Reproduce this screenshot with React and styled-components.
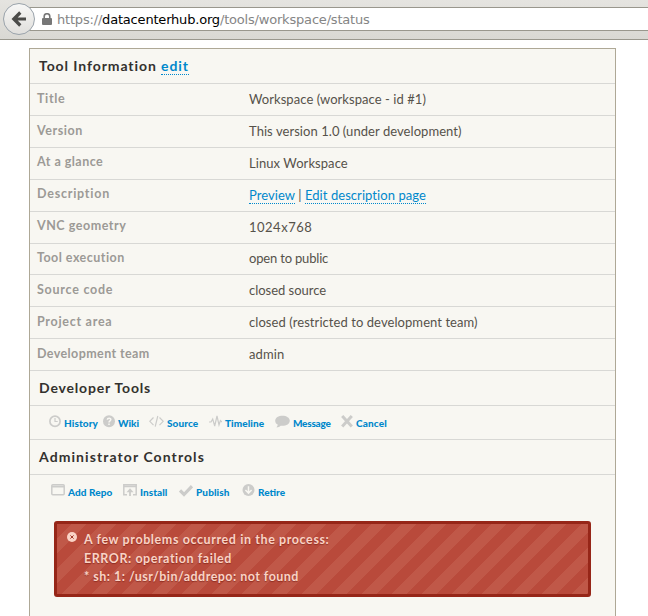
import React from "react";
import styled, { createGlobalStyle } from "styled-components";

const GlobalStyle = createGlobalStyle`
  * { box-sizing: border-box; }
  html { overflow: hidden; }
  body { margin: 0; background: #fff; font-family: Lato, sans-serif; color: #56524a; }
`;

const Page = styled.div`
  width: 648px;
  height: 616px;
  overflow: hidden;
`;

const Toolbar = styled.header`
  display: flex;
  align-items: flex-start;
  height: 40px;
  padding: 3px 0 0 3px;
  background: linear-gradient(#e5e4e0, #d9d8d3);
  border-bottom: 1px solid #99978d;
`;

const BackButton = styled.button`
  position: relative;
  flex: none;
  display: grid;
  place-items: center;
  width: 32px;
  height: 32px;
  padding: 0;
  border: 1px solid #9aa3ab;
  border-radius: 50%;
  background: linear-gradient(#f7f7f6, #e0dfdc);
`;

const AddressBar = styled.div`
  display: flex;
  align-items: center;
  flex: 1;
  height: 24px;
  margin: 4px 0 0 -6px;
  padding-left: 13px;
  background: #fff;
  border: solid #99978d;
  border-width: 1px 0;
`;

const Url = styled.span`
  margin-left: 5px;
  padding-top: 1px;
  font: 13px/22px "DejaVu Sans", sans-serif;
  color: #858585;
  letter-spacing: -0.19px;
  white-space: pre;

  b { font-weight: 400; color: #000; }
`;

const Panel = styled.main`
  width: 587px;
  height: 600px;
  margin: 8px 0 0 29px;
  background: #f8f7f2;
  border: 1px solid #aea896;
`;

const Heading = styled.h2`
  height: 35px;
  margin: 0;
  padding-left: 9px;
  border-bottom: 1px solid #d8d8d5;
  font-size: 14px;
  font-weight: 700;
  line-height: 34px;
  letter-spacing: ${(p) => p.$spacing}px;
  color: #33312e;
  white-space: pre;
`;

const Link = styled.a`
  color: #0088cc;
  border-bottom: 1px dotted #0088cc;
`;

const Row = styled.div`
  display: grid;
  grid-template-columns: 212px 1fr;
  height: ${(p) => p.$height || 32}px;
  padding-left: 7px;
  border-bottom: 1px solid #d8d8d5;
  white-space: pre;
`;

const Label = styled.span`
  font-size: 12.5px;
  font-weight: 700;
  line-height: ${(p) => p.$line || 30}px;
  letter-spacing: ${(p) => p.$spacing}px;
  color: #9c9a96;
`;

const Value = styled.span`
  font-size: 13px;
  line-height: ${(p) => p.$line || 30}px;
  letter-spacing: ${(p) => p.$spacing}px;
`;

const Actions = styled.nav`
  display: flex;
  height: 34px;
  padding-left: ${(p) => p.$inset}px;
  border-bottom: ${(p) => (p.$ruled ? "1px solid #d8d8d5" : "0")};
`;

const Action = styled.a`
  display: flex;
  width: ${(p) => p.$width}px;
  color: #0088cc;
  font-size: 10px;
  font-weight: 900;
  line-height: 35px;
  letter-spacing: ${(p) => p.$spacing || 0}px;
  white-space: nowrap;

  svg {
    flex: none;
    margin: 9px 3px 0 0;
    color: #ccccca;
  }
`;

const Alert = styled.section`
  display: flex;
  width: 537px;
  height: 76px;
  margin: 12px 0 0 24px;
  padding: 7px 10px;
  border: 3px solid #962618;
  border-radius: 3px;
  background: #b94a3b
    linear-gradient(135deg, transparent 25%, #c05848 25%, #c05848 50%, transparent 50%, transparent 75%, #c05848 75%)
    0 0 / 30px 30px;
`;

const AlertIcon = styled.svg`
  flex: none;
  margin: 1px 7px 0 0;
`;

const AlertText = styled.div`
  font-size: 12.5px;
  font-weight: 700;
  line-height: 18.5px;
  color: #fad3c6;
  text-shadow: 0 1px 1px rgba(90, 10, 0, 0.45);
  white-space: pre;
`;

const Line = styled.div`
  letter-spacing: ${(p) => p.$spacing}px;
`;

const Icon = ({ w = 13, children }) => (
  <svg width={w} height="13" viewBox={`0 0 ${w} 13`} fill="none" stroke="currentColor" strokeWidth="1.5">
    {children}
  </svg>
);

const icons = {
  history: <Icon w={12}><circle cx="6" cy="6.2" r="5.1" strokeWidth="1.7" /><path d="M6 3v3.5h2.7" strokeWidth="1.2" /></Icon>,
  wiki: <Icon w={12}><circle cx="6" cy="6.2" r="6" fill="currentColor" stroke="none" /><path d="M4.3 4.7C4.4 2.6 8 2.7 7.8 4.8 7.7 6 6 5.9 6 7.6M6 8.6v1.4" stroke="#f8f7f2" strokeWidth="1.5" /></Icon>,
  source: <Icon w={15}><path d="M4.5 2.5.8 6.3l3.7 3.8M10.5 2.5l3.7 3.8-3.7 3.8M8.8 1 6.2 11.6" strokeWidth="1.2" /></Icon>,
  timeline: <Icon w={13}><path d="M0 7h2l1.7-3 2 7L8 1l2 9 1.4-4.5L13 7" strokeWidth="1.2" /></Icon>,
  message: <Icon w={15}><path d="M7.5.7C3.6.7.2 2.6.2 5.7c0 1.9 1 3.2 2.7 4.1L1.5 12.4c1.7 0 3.1-.6 4.1-1.7 5 .6 9.2-1.5 9.2-5 0-3-3.4-5-7.3-5Z" fill="currentColor" stroke="none" /></Icon>,
  cancel: <Icon w={12}><path d="m1.2 1 9.6 10.4M10.8 1l-9.6 10.4" strokeWidth="3" /></Icon>,
  add: <Icon w={14}><rect x=".8" y=".8" width="12.4" height="10" rx="1" /><path d="M1 2.6h12" strokeWidth="1.8" /></Icon>,
  install: <Icon w={14}><path d="M4 10.8H.8V.8h12.4v10H10M1 2.6h12" /><path d="M7 12V6" strokeWidth="1.8" /><path d="m3.5 8.2 3.5-4 3.5 4Z" fill="currentColor" stroke="none" /></Icon>,
  publish: <Icon w={14}><path d="m1 6.5 4 4L13 2.2" strokeWidth="3.2" /></Icon>,
  retire: <Icon w={13}><circle cx="6.5" cy="6" r="6" fill="currentColor" stroke="none" /><path d="M6.5 2.3v6.5M3.4 6l3.1 3.1L9.6 6" stroke="#f8f7f2" strokeWidth="1.5" /></Icon>,
};

const rows = [
  { label: "Title", ls: 0.65, vs: 0.06, value: "Workspace (workspace - id #1)" },
  { label: "Version", ls: 0.57, vs: 0.06, value: "This version 1.0 (under development)" },
  { label: "At a glance", ls: 0.47, line: 28, vs: 0.07, value: "Linux Workspace" },
  { label: "Description", ls: 0.77, line: 28, vs: 0.06, value: <><Link>Preview</Link> | <Link>Edit description page</Link></> },
  { label: "VNC geometry", ls: 0.53, line: 28, vs: 0.5, value: "1024x768" },
  { label: "Tool execution", ls: 0.47, height: 31, line: 28, vl: 29, vs: -0.18, value: "open to public" },
  { label: "Source code", ls: 0.75, vs: -0.03, value: "closed source" },
  { label: "Project area", ls: 0.72, vs: 0.07, value: "closed (restricted to development team)" },
  { label: "Development team", ls: 0.4, vs: 0.1, value: "admin" },
];

const developerTools = [
  { name: "History", icon: "history", width: 54, ls: 0.1 },
  { name: "Wiki", icon: "wiki", width: 46 },
  { name: "Source", icon: "source", width: 60, ls: 0.1 },
  { name: "Timeline", icon: "timeline", width: 66, ls: 0.08 },
  { name: "Message", icon: "message", width: 66, ls: -0.25 },
  { name: "Cancel", icon: "cancel", width: 60, ls: 0.15 },
];

const adminControls = [
  { name: "Add Repo", icon: "add", width: 72, ls: 0.08 },
  { name: "Install", icon: "install", width: 56, ls: 0.05 },
  { name: "Publish", icon: "publish", width: 63, ls: 0.1 },
  { name: "Retire", icon: "retire", width: 60 },
];

const ActionList = ({ items, ...rest }) => (
  <Actions {...rest}>
    {items.map((a) => (
      <Action key={a.name} $width={a.width} $spacing={a.ls}>{icons[a.icon]}{a.name}</Action>
    ))}
  </Actions>
);

export default function App() {
  return (
    <Page>
      <GlobalStyle />
      <Toolbar>
        <BackButton aria-label="Back">
          <svg width="16" height="16" viewBox="0 0 16 16" fill="none" stroke="#4b4b49" strokeWidth="3.2">
            <path d="M15 8H4M9.3 1.5 2.8 8l6.5 6.5" />
          </svg>
        </BackButton>
        <AddressBar>
          <svg width="10" height="12" viewBox="0 0 10 12">
            <path d="M2.2 6V3.5a2.8 2.8 0 0 1 5.6 0V6" fill="none" stroke="#777" strokeWidth="1.6" />
            <rect y="5" width="10" height="7" rx="1" fill="#777" />
          </svg>
          <Url>https://<b>datacenterhub.org</b>/tools/workspace/status</Url>
        </AddressBar>
      </Toolbar>
      <Panel>
        <Heading $spacing={0.92}>Tool Information <Link>edit</Link></Heading>
        {rows.map((r) => (
          <Row key={r.label} $height={r.height}>
            <Label $spacing={r.ls} $line={r.line}>{r.label}</Label>
            <Value $spacing={r.vs} $line={r.vl}>{r.value}</Value>
          </Row>
        ))}
        <Heading $spacing={0.82}>Developer Tools</Heading>
        <ActionList items={developerTools} $inset={19} $ruled />
        <Heading $spacing={1.08}>Administrator Controls</Heading>
        <ActionList items={adminControls} $inset={21} />
        <Alert>
          <AlertIcon width="10" height="10" viewBox="0 0 10 10">
            <circle cx="5" cy="5" r="5" fill="#fad3c6" />
            <path d="m3.4 3.4 3.2 3.2M6.6 3.4 3.4 6.6" stroke="#a33b2b" />
          </AlertIcon>
          <AlertText>
            <Line $spacing={0.6}>A few problems occurred in the process:</Line>
            <Line $spacing={0.55}>ERROR: operation failed</Line>
            <Line $spacing={0.47}>* sh: 1: /usr/bin/addrepo: not found</Line>
          </AlertText>
        </Alert>
      </Panel>
    </Page>
  );
}
